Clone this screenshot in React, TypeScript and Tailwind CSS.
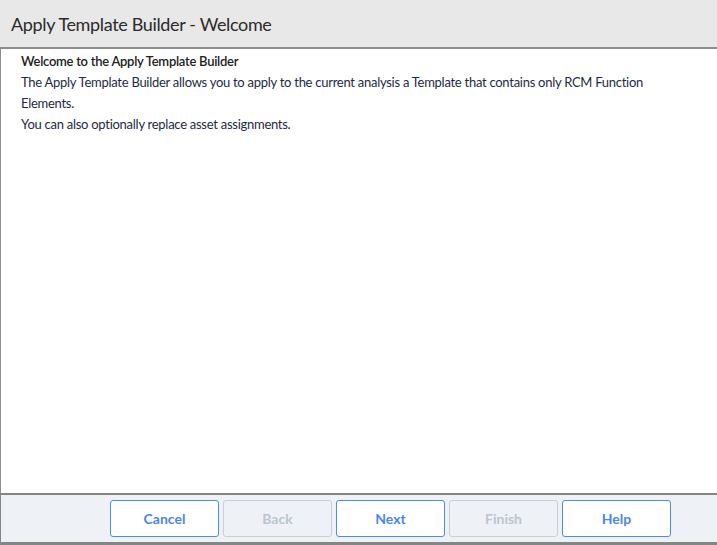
const buttons = [
    { label: "Cancel", disabled: false },
    { label: "Back", disabled: true },
    { label: "Next", disabled: false },
    { label: "Finish", disabled: true },
    { label: "Help", disabled: false },
]

function FooterButton({ label, disabled }: { label: string; disabled: boolean }) {
    const cls = [
        "w-[109px] h-[37px] rounded-[3px] border text-[14px] font-bold",
        disabled
            ? "bg-[#eef2f6] border-[#c9cfd5] text-[#bcc5cd]"
            : "bg-white border-[#4a8cf0] text-[#4a86ea]",
    ].join(" ")
    return (
        <button type="button" disabled={disabled} className={cls}>
            {label}
        </button>
    )
}

export default function App() {
    return (
        <div className="w-[717px] h-[545px] flex flex-col bg-white font-['Lato',sans-serif] overflow-hidden">
            <header className="h-[49px] shrink-0 bg-[#e8e8e8] border-b-2 border-[#8e8e8e] flex items-center pl-[11px]">
                <h1 className="text-[18px] tracking-[-0.35px] text-[#2b2b2b] leading-none">Apply Template Builder - Welcome</h1>
            </header>

            <main className="flex-1 border-l border-[#8e8e8e] pl-5 pr-5 pt-[2px] tracking-[-0.27px]">
                <p className="text-[13px] leading-[21px] font-semibold text-[#222]">Welcome to the Apply Template Builder</p>
                <p className="text-[13px] leading-[21px] text-[#1e2a44]">
                    The Apply Template Builder allows you to apply to the current analysis a Template that contains only RCM Function Elements.
                </p>
                <p className="text-[13px] leading-[21px] text-[#1e2a44]">You can also optionally replace asset assignments.</p>
            </main>

            <footer className="h-[52px] shrink-0 bg-[#eef2f6] border-t-2 border-b-[3px] border-l border-[#858585] flex items-center justify-end gap-[4px] pr-[46px]">
                {buttons.map((b) => (
                    <FooterButton key={b.label} label={b.label} disabled={b.disabled} />
                ))}
            </footer>
        </div>
    )
}
